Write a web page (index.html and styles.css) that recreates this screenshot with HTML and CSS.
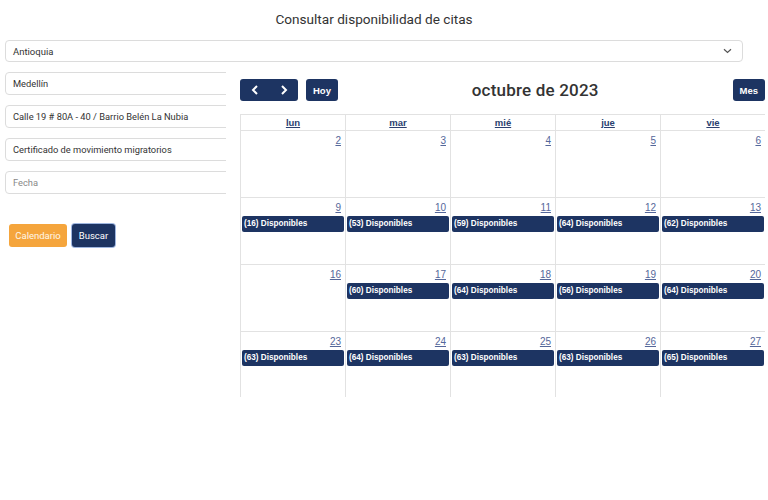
FILE: index.html
```html
<!DOCTYPE html>
<html lang="es">
<head>
<meta charset="utf-8">
<title>Consultar disponibilidad de citas</title>
<link rel="stylesheet" href="styles.css">
</head>
<body>
<div class="page">
  <h1 class="title">Consultar disponibilidad de citas</h1>
  <div class="select">
    <span>Antioquia</span>
    <svg class="chev" width="9" height="6" viewBox="0 0 9 6"><path d="M1 1.2 L4.5 4.5 L8 1.2" fill="none" stroke="#555" stroke-width="1.2"/></svg>
  </div>
  <div class="main">
    <div class="form">
      <div class="field">Medellín</div>
      <div class="field">Calle 19 # 80A - 40 / Barrio Belén La Nubia</div>
      <div class="field">Certificado de movimiento migratorios</div>
      <div class="field placeholder">Fecha</div>
      <div class="actions">
        <button class="btn orange">Calendario</button>
        <button class="btn navy focus">Buscar</button>
      </div>
    </div>
    <div class="cal">
      <div class="toolbar">
        <div class="tgroup">
          <div class="navgroup">
            <button class="nb"><svg width="8" height="10" viewBox="0 0 8 10"><path d="M6 1 L2 5 L6 9" fill="none" stroke="#fff" stroke-width="2"/></svg></button>
            <button class="nb"><svg width="8" height="10" viewBox="0 0 8 10"><path d="M2 1 L6 5 L2 9" fill="none" stroke="#fff" stroke-width="2"/></svg></button>
          </div>
          <button class="tb">Hoy</button>
        </div>
        <h2 class="month">octubre de 2023</h2>
        <button class="tb">Mes</button>
      </div>
      <div class="gridwrap">
        <div class="grid">
          <div class="hd"><a>lun</a></div>
          <div class="hd"><a>mar</a></div>
          <div class="hd"><a>mié</a></div>
          <div class="hd"><a>jue</a></div>
          <div class="hd"><a>vie</a></div>

          <div class="day"><a class="num">2</a></div>
          <div class="day"><a class="num">3</a></div>
          <div class="day"><a class="num">4</a></div>
          <div class="day"><a class="num">5</a></div>
          <div class="day"><a class="num">6</a></div>

          <div class="day"><a class="num">9</a><div class="ev">(16) Disponibles</div></div>
          <div class="day"><a class="num">10</a><div class="ev">(53) Disponibles</div></div>
          <div class="day"><a class="num">11</a><div class="ev">(59) Disponibles</div></div>
          <div class="day"><a class="num">12</a><div class="ev">(64) Disponibles</div></div>
          <div class="day"><a class="num">13</a><div class="ev">(62) Disponibles</div></div>

          <div class="day"><a class="num">16</a></div>
          <div class="day"><a class="num">17</a><div class="ev">(60) Disponibles</div></div>
          <div class="day"><a class="num">18</a><div class="ev">(64) Disponibles</div></div>
          <div class="day"><a class="num">19</a><div class="ev">(56) Disponibles</div></div>
          <div class="day"><a class="num">20</a><div class="ev">(64) Disponibles</div></div>

          <div class="day"><a class="num">23</a><div class="ev">(63) Disponibles</div></div>
          <div class="day"><a class="num">24</a><div class="ev">(64) Disponibles</div></div>
          <div class="day"><a class="num">25</a><div class="ev">(63) Disponibles</div></div>
          <div class="day"><a class="num">26</a><div class="ev">(63) Disponibles</div></div>
          <div class="day"><a class="num">27</a><div class="ev">(65) Disponibles</div></div>
        </div>
      </div>
    </div>
  </div>
</div>
</body>
</html>
```

FILE: styles.css
```css
html, body {
  margin: 0;
  padding: 0;
  background: #fff;
}
body {
  font-family: Roboto, "Liberation Sans", sans-serif;
  color: #333;
  width: 768px;
  height: 500px;
  overflow: hidden;
}
.page {
  padding: 0 0 0 5px;
}
.title {
  width: 738px;
  margin: 0;
  padding-top: 10px;
  height: 40px;
  box-sizing: border-box;
  text-align: center;
  font-size: 13.6px;
  font-weight: 400;
  color: #333;
  line-height: 18px;
}
.select {
  width: 738px;
  height: 22px;
  box-sizing: border-box;
  border: 1px solid #dcdcdc;
  border-radius: 4px;
  display: flex;
  align-items: center;
  justify-content: space-between;
  padding: 0 10px 0 7px;
  font-size: 9.5px;
  color: #333;
}
.chev {
  display: block;
}
.main {
  display: flex;
  align-items: flex-start;
  margin-top: 10px;
}
.form {
  width: 221px;
  overflow: hidden;
  display: flex;
  flex-direction: column;
  gap: 10px;
  flex: none;
}
.field {
  width: 240px;
  height: 23px;
  box-sizing: border-box;
  border: 1px solid #dcdcdc;
  border-radius: 4px;
  display: flex;
  align-items: center;
  padding-left: 7px;
  font-size: 9.3px;
  color: #333;
  white-space: nowrap;
}
.field.placeholder {
  color: #888;
}
.actions {
  display: flex;
  gap: 5px;
  margin-top: 20px;
  padding-left: 4px;
  padding-bottom: 2px;
}
.btn {
  height: 23px;
  border: 0;
  border-radius: 3px;
  font-family: Roboto, "Liberation Sans", sans-serif;
  font-size: 9.5px;
  color: #fff;
  padding: 0;
}
.orange {
  width: 58px;
  background: #f5a53c;
  color: #fff7e8;
}
.navy {
  width: 43px;
  background: #1d3462;
}
.focus {
  box-shadow: 0 0 0 1px #9fb6e0;
}
.cal {
  margin-left: 14px;
  width: 525px;
  flex: none;
  margin-top: 7px;
}
.toolbar {
  display: flex;
  justify-content: space-between;
  align-items: center;
  height: 22px;
}
.tgroup {
  display: flex;
  gap: 8px;
}
.navgroup {
  display: flex;
  width: 58px;
  height: 22px;
  background: #1d3462;
  border-radius: 3px;
}
.nb {
  flex: 1;
  border: 0;
  background: transparent;
  display: flex;
  align-items: center;
  justify-content: center;
  padding: 0;
}
.tb {
  height: 22px;
  border: 0;
  border-radius: 3px;
  background: #1d3462;
  color: #fff;
  font-family: "Liberation Sans", Arial, sans-serif;
  font-weight: 700;
  font-size: 9.5px;
  padding: 0 7px;
}
.month {
  margin: 0;
  font-size: 17px;
  font-weight: 500;
  color: #333;
  letter-spacing: 0.2px;
}
.gridwrap {
  margin-top: 13px;
  height: 283px;
  overflow: hidden;
}
.grid {
  display: grid;
  grid-template-columns: repeat(5, 105px);
  grid-template-rows: 16px repeat(4, 67px);
  border-top: 1px solid #e2e2e2;
  border-left: 1px solid #e2e2e2;
  box-sizing: border-box;
  width: 526px;
}
.grid > div {
  border-right: 1px solid #e2e2e2;
  border-bottom: 1px solid #e2e2e2;
}
.hd {
  text-align: center;
  font-family: "Liberation Sans", Arial, sans-serif;
  font-weight: 700;
  font-size: 9.5px;
  line-height: 15px;
}
.hd a {
  color: #2b3f70;
  text-decoration: underline;
}
.day {
  display: flex;
  flex-direction: column;
}
.num {
  align-self: flex-end;
  font-family: "Liberation Sans", Arial, sans-serif;
  font-size: 10px;
  color: #55679a;
  text-decoration: underline;
  padding: 3px 4px 0 0;
  line-height: 13px;
}
.ev {
  margin: 2px 1px 0 1px;
  height: 16px;
  background: #1d3462;
  border-radius: 2px;
  color: #fff;
  font-family: "Liberation Sans", Arial, sans-serif;
  font-weight: 700;
  font-size: 8.2px;
  line-height: 16px;
  padding-left: 2px;
  white-space: nowrap;
}
```
